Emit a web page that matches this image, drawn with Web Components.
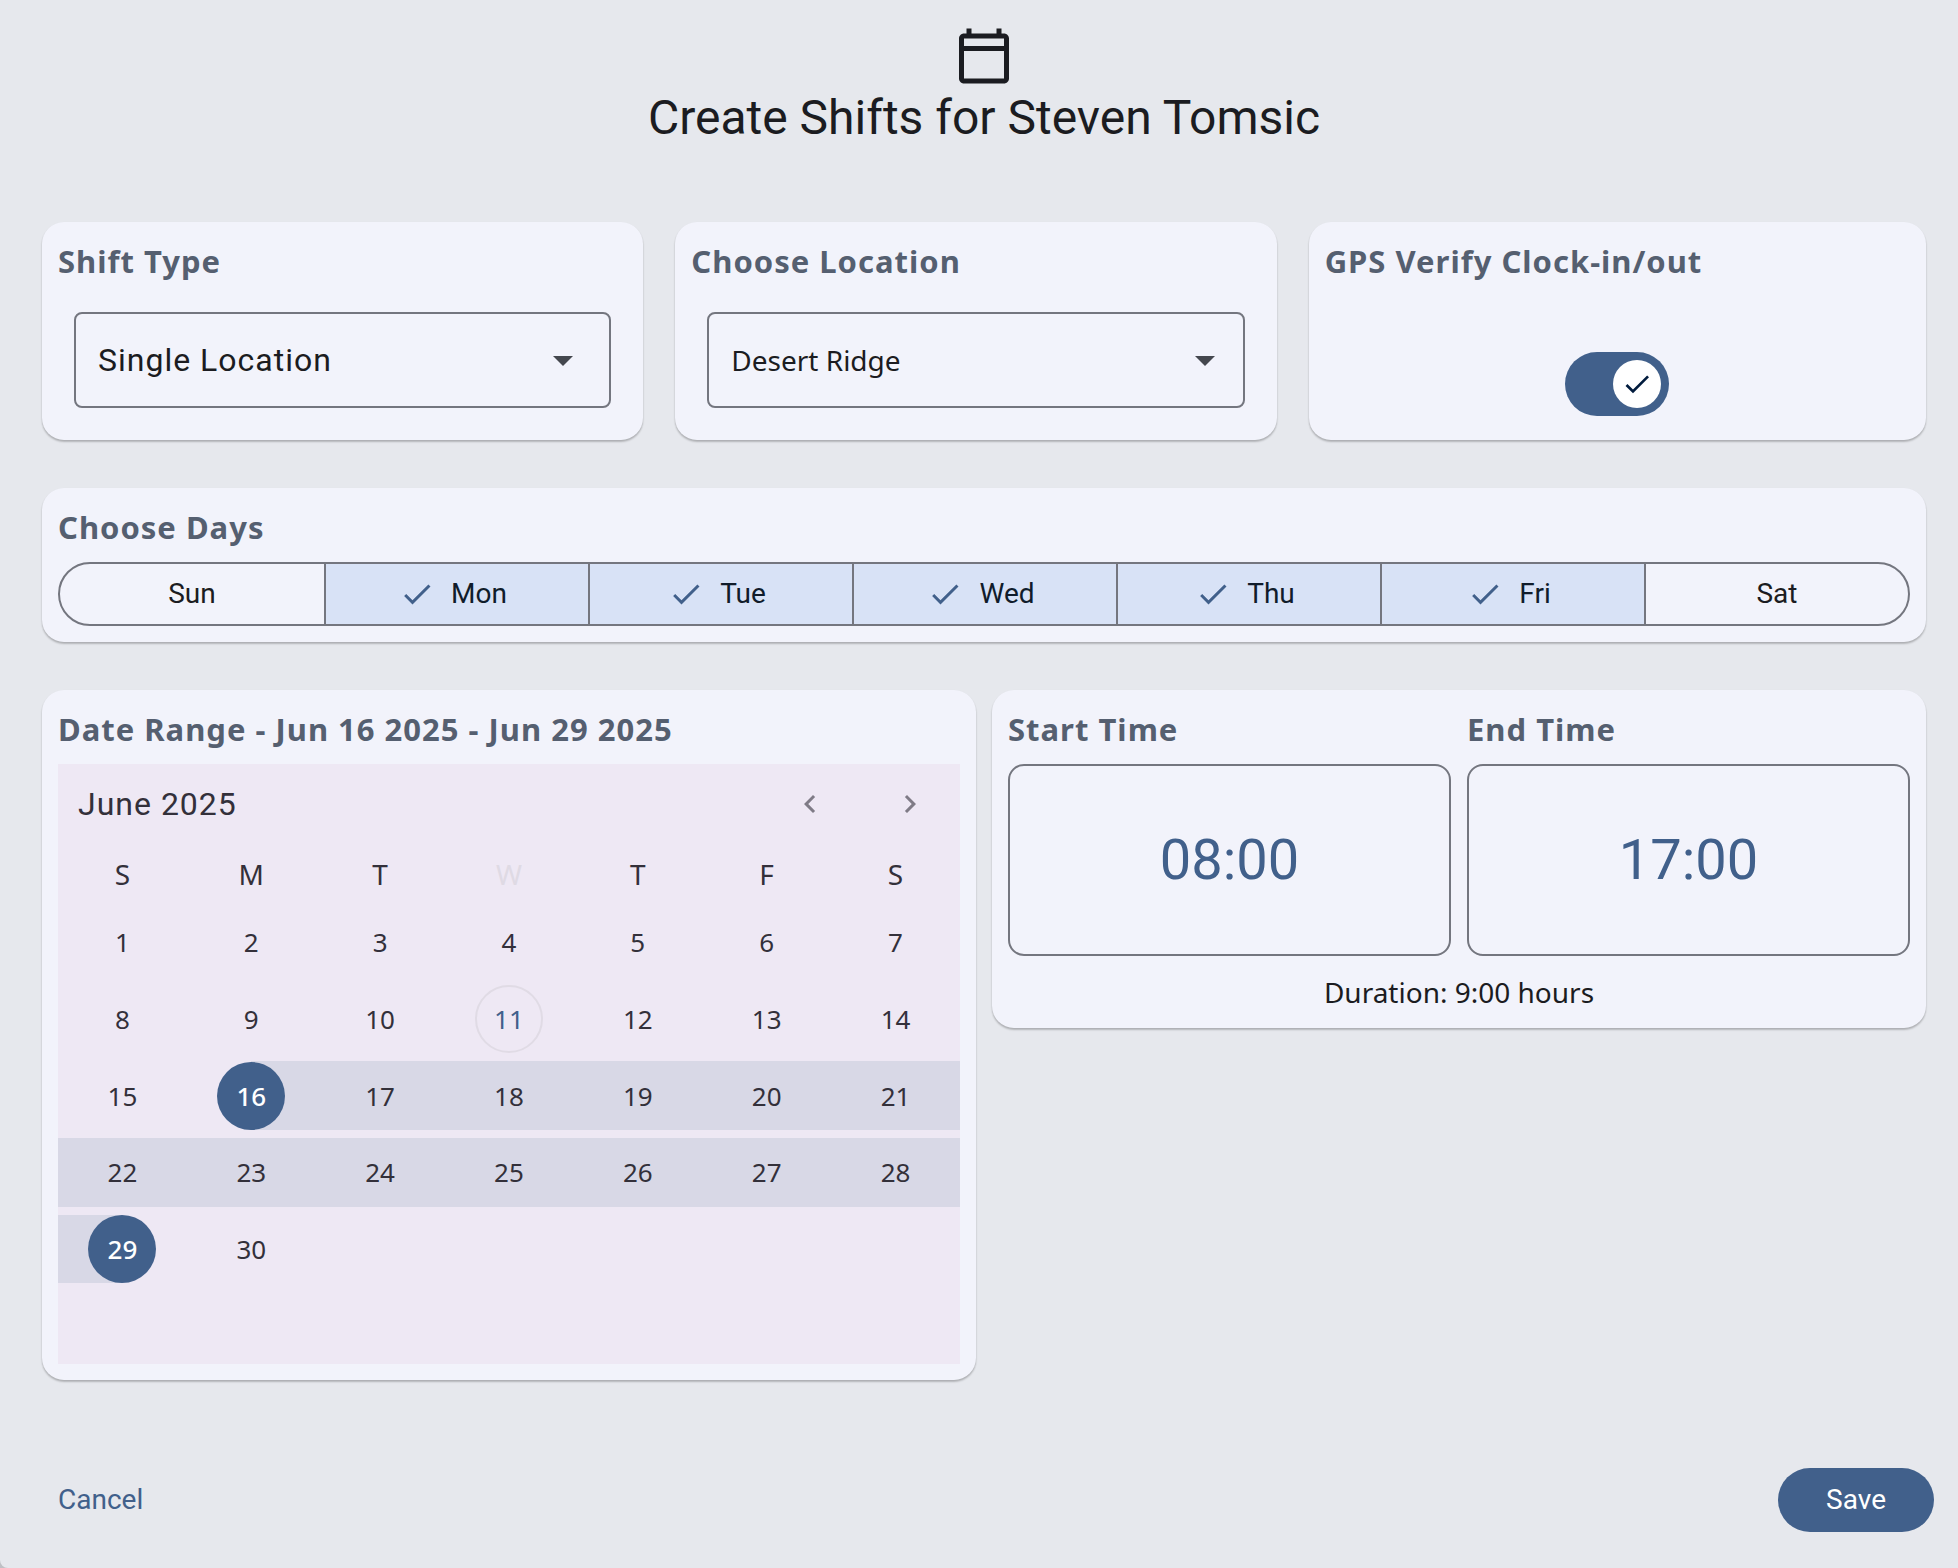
<!DOCTYPE html>
<html lang="en">
<head>
<meta charset="utf-8">
<meta name="viewport" content="width=device-width, initial-scale=1">
<title>Create Shifts</title>
<style>
  :root {
    --primary: #41608b;
    --on-primary: #ffffff;
    --surface: #e6e8ed;
    --card: #f2f3fb;
    --outline: #74767f;
    --text: #1b1c21;
    --title: #555f70;
    --chosen: #d8e2f6;
    --calendar: #eee8f4;
    --range: #d8d8e6;
    --roboto: Roboto, "Liberation Sans", sans-serif;
    --humanist: "Noto Sans", "Open Sans", sans-serif;
  }
  body { margin: 0; background: #bfc0c5; color: var(--text); font-family: var(--roboto); }
</style>
</head>
<body>
<create-shifts></create-shifts>

<script>
const define = (name, html, setup) => {
  const template = document.createElement('template');
  template.innerHTML = html;
  customElements.define(name, class extends HTMLElement {
    constructor() {
      super();
      this.attachShadow({ mode: 'open' }).append(template.content.cloneNode(true));
    }
    connectedCallback() {
      if (setup && !this.ready) { this.ready = true; setup(this, this.shadowRoot); }
    }
  });
};

const CHECK = 'M9 16.17L4.83 12l-1.42 1.41L9 19 21 7l-1.41-1.41z';
const TITLE = `
  .title { display: block; margin: 0; padding-bottom: 12px; color: var(--title);
    font: 700 31px/46px var(--humanist); letter-spacing: 1px; }`;

// Raised panel
define('shift-card', `
  <style>
    :host { display: block; box-sizing: border-box; padding: 16px; border-radius: 22px;
      background: var(--card);
      box-shadow: 0 2px 2px rgba(0,0,0,.2), 0 1px 2px rgba(0,0,0,.08); }
  </style>
  <slot></slot>`);

// Card with a labelled drop-down
define('shift-select', `
  <style>
    :host { display: block; }
    shift-card { height: 100%; }
    ${TITLE}
    .field { display: grid; align-items: center; margin: 16px; }
    select, svg { grid-area: 1 / 1; }
    select { appearance: none; width: 100%; height: 96px; margin: 0; padding: 0 72px 0 22px;
      border: 2px solid var(--outline); border-radius: 8px; background: transparent;
      color: var(--text); font: 400 32px var(--roboto); letter-spacing: 1px; }
    svg { justify-self: end; width: 48px; height: 48px; margin-right: 24px; fill: #44474e; pointer-events: none; }
    :host([compact]) select { font: 400 28px var(--humanist); letter-spacing: normal; }
    :host([compact]) svg { margin-right: 16px; }
  </style>
  <shift-card>
    <label class="title" for="choice"></label>
    <div class="field">
      <select id="choice"><option></option></select>
      <svg viewBox="0 0 24 24" aria-hidden="true"><path d="M7 10l5 5 5-5z"/></svg>
    </div>
  </shift-card>`, (host, root) => {
  root.querySelector('label').textContent = host.getAttribute('label');
  root.querySelector('option').textContent = host.getAttribute('value');
});

// Card with an on/off switch
define('shift-switch', `
  <style>
    :host { display: block; }
    shift-card { display: flex; flex-direction: column; justify-content: space-between; height: 100%; }
    ${TITLE}
    .switch { position: relative; display: flex; align-items: center; justify-content: flex-end;
      align-self: center; box-sizing: border-box; width: 104px; height: 64px; margin-bottom: 8px;
      padding: 8px; border-radius: 32px; background: var(--primary); }
    input { position: absolute; inset: 0; width: 100%; height: 100%; margin: 0; opacity: 0; }
    .switch:has(input:not(:checked)) { justify-content: flex-start; background: var(--outline); }
    .knob { display: grid; place-items: center; width: 48px; height: 48px; border-radius: 50%; background: #fff; }
    svg { width: 32px; height: 32px; fill: #001b3d; }
  </style>
  <shift-card>
    <label class="title" for="toggle"></label>
    <span class="switch">
      <input id="toggle" type="checkbox" role="switch" checked>
      <span class="knob"><svg viewBox="0 0 24 24" aria-hidden="true"><path d="${CHECK}"/></svg></span>
    </span>
  </shift-card>`, (host, root) => {
  root.querySelector('label').textContent = host.getAttribute('label');
});

// Segmented weekday picker
define('shift-days', `
  <style>
    :host { display: block; }
    ${TITLE}
    .bar { display: grid; grid-template-columns: repeat(7, 1fr); box-sizing: border-box; height: 64px;
      border: 2px solid var(--outline); border-radius: 32px; overflow: hidden; }
    label { position: relative; display: flex; align-items: center; justify-content: center;
      box-sizing: border-box; gap: 16px; font: 400 28px/40px var(--roboto); }
    label + label { border-left: 2px solid var(--outline); }
    label:has(:checked) { padding-right: 8px; background: var(--chosen); color: #101c2b; }
    input { position: absolute; inset: 0; width: 100%; height: 100%; margin: 0; opacity: 0; }
    svg { display: none; width: 36px; height: 36px; fill: var(--primary); }
    :checked ~ svg { display: block; }
  </style>
  <shift-card>
    <h2 class="title" id="t">Choose Days</h2>
    <div class="bar" role="group" aria-labelledby="t"></div>
  </shift-card>`, (host, root) => {
  root.querySelector('.bar').innerHTML = ['Sun', 'Mon', 'Tue', 'Wed', 'Thu', 'Fri', 'Sat'].map((day, i) =>
    `<label><input type="checkbox" ${i > 0 && i < 6 ? 'checked' : ''}><svg viewBox="0 0 24 24" aria-hidden="true"><path d="${CHECK}"/></svg><span>${day}</span></label>`).join('');
});

// Month calendar with a selected range
define('shift-calendar', `
  <style>
    :host { display: block; }
    ${TITLE}
    .month { background: var(--calendar); color: #33303a; }
    header { display: flex; align-items: center; height: 80px; padding: 0 0 0 20px; }
    h3 { flex: 1; margin: 0; font: 400 32px/40px var(--roboto); letter-spacing: 1px; }
    nav { display: flex; }
    button { margin: 0; padding: 0; border: 0; background: none; color: inherit; font: inherit; }
    nav button { display: grid; place-items: center; width: 100px; height: 80px; }
    nav svg { width: 36px; height: 36px; fill: #7f7b86; }
    table { width: 100%; height: 520px; table-layout: fixed; border-collapse: separate; border-spacing: 0; text-align: center; }
    thead tr { height: 60px; }
    tbody tr { height: 76px; }
    th { height: 60px; padding: 0; font: 400 28px/40px var(--humanist); }
    th.today { color: #dfdae4; }
    td { box-sizing: border-box; height: 76px; padding: 0; border: 0 solid transparent; border-width: 4px 0;
      background-clip: padding-box; background-origin: padding-box; font: 400 26px/40px var(--humanist); }
    td button { box-sizing: border-box; display: block; width: 68px; height: 68px; margin: 0 auto; border-radius: 50%; }
    td .today { border: 2px solid #e0dbe5; color: var(--primary); }
    .in { background-color: var(--range); }
    .first { background-image: linear-gradient(to right, transparent 50%, var(--range) 50%); }
    .last { background-image: linear-gradient(to right, var(--range) 50%, transparent 50%); }
    .first button, .last button { background: var(--primary); color: var(--on-primary); font-weight: 500; }
  </style>
  <shift-card>
    <h2 class="title">Date Range - Jun 16 2025 - Jun 29 2025</h2>
    <div class="month">
      <header>
        <h3>June 2025</h3>
        <nav>
          <button type="button" aria-label="Previous month"><svg viewBox="0 0 24 24"><path d="M15.41 7.41L14 6l-6 6 6 6 1.41-1.41L10.83 12z"/></svg></button>
          <button type="button" aria-label="Next month"><svg viewBox="0 0 24 24"><path d="M10 6L8.59 7.41 13.17 12l-4.58 4.59L10 18l6-6z"/></svg></button>
        </nav>
      </header>
      <table>
        <thead><tr><th>S</th><th>M</th><th>T</th><th class="today">W</th><th>T</th><th>F</th><th>S</th></tr></thead>
        <tbody></tbody>
      </table>
    </div>
  </shift-card>`, (host, root) => {
  const from = 16, to = 29, today = 11;
  let rows = '';
  for (let week = 0; week < 6; week++) {
    rows += '<tr>';
    for (let d = week * 7 + 1; d <= week * 7 + 7; d++) {
      const state = d === from ? 'first' : d === to ? 'last' : d > from && d < to ? 'in' : '';
      rows += d > 30 ? '<td></td>'
        : `<td class="${state}"><button type="button" class="${d === today ? 'today' : ''}">${d}</button></td>`;
    }
    rows += '</tr>';
  }
  root.querySelector('tbody').innerHTML = rows;
});

// Start and end times with their duration
define('shift-times', `
  <style>
    :host { display: block; }
    ${TITLE}
    .pair { display: grid; grid-template-columns: 1fr 1fr; gap: 16px; }
    button { display: block; width: 100%; height: 192px; margin: 0; padding: 0; border: 2px solid var(--outline);
      border-radius: 16px; background: none; color: var(--primary); font: 400 56px/64px var(--roboto); }
    p { margin: 16px 0 0; text-align: center; font: 400 28px/40px var(--humanist); }
  </style>
  <shift-card>
    <div class="pair">
      <div><label class="title" for="start">Start Time</label><button type="button" id="start">08:00</button></div>
      <div><label class="title" for="end">End Time</label><button type="button" id="end">17:00</button></div>
    </div>
    <p>Duration: 9:00 hours</p>
  </shift-card>`);

define('create-shifts', `
  <style>
    :host { display: flex; flex-direction: column; box-sizing: border-box; min-height: 100vh;
      padding: 26px 32px 36px 42px; background: var(--surface); border-bottom-left-radius: 8px; }
    .head { display: flex; flex-direction: column; align-items: center; margin-bottom: 72px; }
    .head svg { width: 60px; height: 60px; fill: var(--text); }
    h1 { margin: 0; font: 400 48px/64px var(--roboto); }
    .options { display: flex; gap: 32px; margin-bottom: 48px; }
    .options > * { flex: 1 1 0; }
    .options > :last-child { flex-basis: 16px; }
    shift-days { margin-bottom: 48px; }
    .when { display: grid; grid-template-columns: 1fr 1fr; align-items: start; gap: 16px; }
    footer { display: flex; align-items: center; justify-content: space-between; margin: 88px -8px 0 0; }
    button { height: 64px; margin: 0; padding: 0 16px; border: 0; border-radius: 32px; background: none;
      color: var(--primary); font: 400 28px/40px var(--roboto); }
    .save { padding: 0 48px; background: var(--primary); color: var(--on-primary); }
  </style>
  <div class="head">
    <svg viewBox="0 0 24 24" aria-hidden="true"><path d="M20 3h-1V1h-2v2H7V1H5v2H4c-1.100 0-2 .9-2 2v16c0 1.100.9 2 2 2h16c1.100 0 2-.9 2-2V5c0-1.100-.9-2-2-2zm0 18H4V10h16v11zm0-13H4V5h16v3z"/></svg>
    <h1>Create Shifts for Steven Tomsic</h1>
  </div>
  <div class="options">
    <shift-select label="Shift Type" value="Single Location"></shift-select>
    <shift-select compact label="Choose Location" value="Desert Ridge"></shift-select>
    <shift-switch label="GPS Verify Clock-in/out"></shift-switch>
  </div>
  <shift-days></shift-days>
  <div class="when">
    <shift-calendar></shift-calendar>
    <shift-times></shift-times>
  </div>
  <footer>
    <button type="button" class="cancel">Cancel</button>
    <button type="button" class="save">Save</button>
  </footer>`);
</script>
</body>
</html>
